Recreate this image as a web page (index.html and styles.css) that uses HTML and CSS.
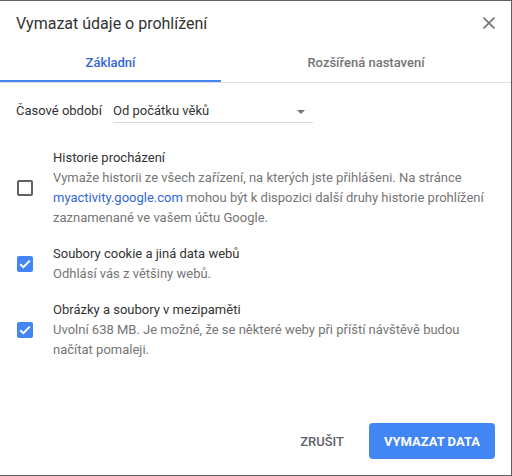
FILE: index.html
```html
<!DOCTYPE html>
<html lang="cs">
<head>
<meta charset="utf-8">
<title>Vymazat údaje o prohlížení</title>
<link rel="stylesheet" href="styles.css">
</head>
<body>
<div class="dialog">
  <div class="header">
    <h1 class="title">Vymazat údaje o prohlížení</h1>
    <span class="close" aria-label="Zavřít">
      <svg width="12" height="12" viewBox="0 0 12 12"><path d="M0.5 0.5 L11.5 11.5 M11.5 0.5 L0.5 11.5" stroke="#757575" stroke-width="1.6" fill="none"/></svg>
    </span>
  </div>
  <div class="tabs">
    <div class="tab tab-active">Základní</div>
    <div class="tab">Rozšířená nastavení</div>
  </div>
  <div class="content">
    <div class="range-row">
      <span class="range-label">Časové období</span>
      <div class="select">
        <span>Od počátku věků</span>
        <span class="arrow"></span>
      </div>
    </div>
    <div class="items">
      <div class="item">
        <span class="checkbox"></span>
        <div class="item-text">
          <div class="item-title">Historie procházení</div>
          <div class="item-desc">Vymaže historii ze všech zařízení, na kterých jste přihlášeni. Na stránce <span class="link">myactivity.google.com</span> mohou být k dispozici další druhy historie prohlížení zaznamenané ve vašem účtu Google.</div>
        </div>
      </div>
      <div class="item">
        <span class="checkbox checked"><svg width="12" height="10" viewBox="0 0 12 10"><path d="M1.2 5.2 L4.4 8.2 L10.8 1.6" stroke="#fff" stroke-width="2" fill="none"/></svg></span>
        <div class="item-text">
          <div class="item-title">Soubory cookie a jiná data webů</div>
          <div class="item-desc">Odhlásí vás z většiny webů.</div>
        </div>
      </div>
      <div class="item">
        <span class="checkbox checked"><svg width="12" height="10" viewBox="0 0 12 10"><path d="M1.2 5.2 L4.4 8.2 L10.8 1.6" stroke="#fff" stroke-width="2" fill="none"/></svg></span>
        <div class="item-text">
          <div class="item-title">Obrázky a soubory v mezipaměti</div>
          <div class="item-desc">Uvolní 638 MB. Je možné, že se některé weby při příští návštěvě budou načítat pomaleji.</div>
        </div>
      </div>
    </div>
  </div>
  <div class="footer">
    <button class="btn btn-cancel">Zrušit</button>
    <button class="btn btn-primary">Vymazat data</button>
  </div>
</div>
</body>
</html>
```
FILE: styles.css
```css
* { box-sizing: border-box; }
html, body { margin: 0; padding: 0; background: #fff; }
body {
  font-family: Roboto, "Noto Sans", Arial, sans-serif;
  color: #333;
  width: 512px;
  height: 476px;
}
.dialog {
  width: 512px;
  height: 476px;
  border-top: 1px solid #5f5f5f;
  border-right: 1px solid #5f5f5f;
  border-bottom: 1px solid #5f5f5f;
  display: flex;
  flex-direction: column;
}
.header {
  height: 44px;
  display: flex;
  align-items: center;
  justify-content: space-between;
  padding: 0 16px 0 16px;
}
.title {
  margin: 0;
  font-size: 16px;
  font-weight: 400;
  color: #333;
}
.close {
  display: flex;
  width: 12px;
  height: 12px;
  margin-right: 0;
}
.tabs {
  display: flex;
  border-bottom: 1px solid #e0e0e0;
}
.tab {
  height: 37px;
  line-height: 35px;
  padding-bottom: 2px;
  text-align: center;
  font-size: 13px;
  font-weight: 500;
  color: #757575;
  flex: 1;
}
.tab-active {
  flex: 0 0 221px;
  color: #3367d6;
  box-shadow: inset 0 -2px 0 #4285f4;
}
.content {
  padding: 0 16px;
}
.range-row {
  display: flex;
  align-items: flex-end;
  margin-top: 17px;
  font-size: 13px;
}
.range-label {
  width: 97px;
  height: 23px;
  line-height: 22px;
  color: #333;
}
.select {
  width: 200px;
  height: 23px;
  line-height: 22px;
  border-bottom: 1px solid #dadada;
  display: flex;
  justify-content: space-between;
  align-items: center;
  padding-right: 8px;
  color: #333;
}
.arrow {
  width: 0;
  height: 0;
  border-left: 4px solid transparent;
  border-right: 4px solid transparent;
  border-top: 4px solid #757575;
  margin-top: 2px;
}
.items {
  display: flex;
  flex-direction: column;
  margin-top: 17px;
}
.item {
  display: flex;
  align-items: center;
  padding: 8px 0;
}
.checkbox {
  flex: 0 0 16px;
  width: 16px;
  height: 16px;
  margin-left: 1px;
  margin-right: 20px;
  border: 2px solid #5f6368;
  border-radius: 2px;
  display: flex;
  align-items: center;
  justify-content: center;
}
.checkbox.checked {
  background: #4285f4;
  border-color: #4285f4;
}
.item-text {
  font-size: 13px;
  line-height: 20px;
}
.item-title { color: #333; }
.item-desc { color: #757575; }
.link { color: #3367d6; }
.footer {
  margin-top: auto;
  display: flex;
  justify-content: flex-end;
  gap: 10px;
  padding: 0 16px 16px 16px;
}
.btn {
  font-family: Roboto, "Noto Sans", Arial, sans-serif;
  font-size: 13px;
  font-weight: 500;
  text-transform: uppercase;
  height: 36px;
  padding: 0 15px;
  border: none;
  border-radius: 4px;
  background: transparent;
  cursor: pointer;
}
.btn-cancel { color: #5f6368; }
.btn-primary {
  background: #4285f4;
  color: #fff;
  font-weight: 700;
}
```
